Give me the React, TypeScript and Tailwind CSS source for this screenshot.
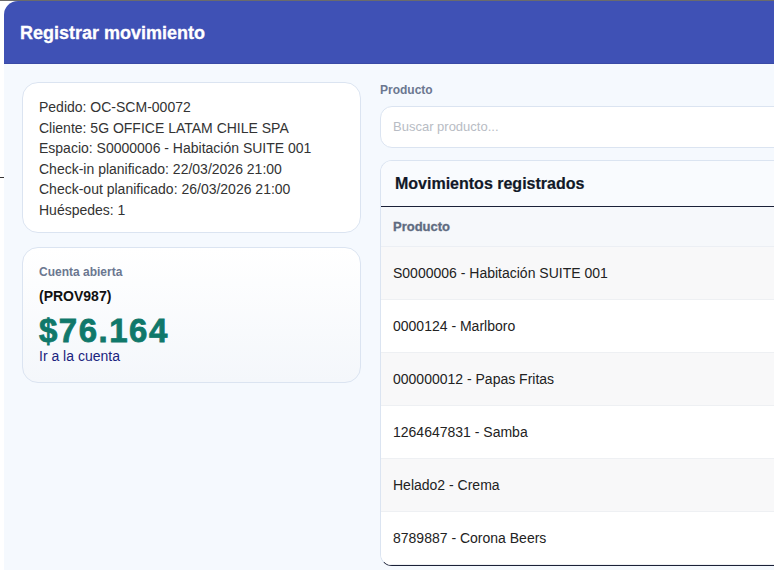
import React from 'react';

interface Movement {
  label: string;
}

const movements: Movement[] = [
  { label: 'S0000006 - Habitación SUITE 001' },
  { label: '0000124 - Marlboro' },
  { label: '000000012 - Papas Fritas' },
  { label: '1264647831 - Samba' },
  { label: 'Helado2 - Crema' },
  { label: '8789887 - Corona Beers' },
];

const bookingLines = [
  'Pedido: OC-SCM-00072',
  'Cliente: 5G OFFICE LATAM CHILE SPA',
  'Espacio: S0000006 - Habitación SUITE 001',
  'Check-in planificado: 22/03/2026 21:00',
  'Check-out planificado: 26/03/2026 21:00',
  'Huéspedes: 1',
];

const App: React.FC = () => {
  return (
    <div
      className="relative w-[774px] h-[570px] overflow-hidden bg-white"
      style={{ fontFamily: '"Liberation Sans", Arial, sans-serif' }}
    >
      {/* backdrop strip peeking over the top */}
      <div className="h-px w-full bg-[#6b6b6b]" />
      <div className="absolute left-0 top-[177px] h-px w-[4px] bg-[#333]" />

      {/* Modal */}
      <div className="ml-[4px] w-[820px] h-[569px] rounded-tl-[14px] overflow-hidden bg-[#f5f9fe] flex flex-col">
        <div className="h-[63px] shrink-0 bg-[#3f51b5] border-b border-[#3a4aa6] flex items-center px-[16px]">
          <h1 className="text-[18px] font-bold text-white [-webkit-text-stroke:0.3px_white] pt-[3px]">Registrar movimiento</h1>
        </div>

        <div className="flex gap-[19px] px-[18px] pt-[18px]">
          {/* Left column */}
          <div className="w-[339px] shrink-0 flex flex-col gap-[14px]">
            <div className="rounded-[16px] border border-[#dbe4f1] bg-white px-[16px] pt-[14px] pb-[12px]">
              {bookingLines.map((line) => (
                <p key={line} className="text-[14px] leading-[20.5px] text-[#333]">
                  {line}
                </p>
              ))}
            </div>

            <div className="rounded-[16px] border border-[#dbe4f1] bg-gradient-to-b from-white to-[#f4f7fb] px-[16px] pt-[15px] pb-[17px]">
              <p className="text-[12px] font-semibold text-[#6b7790] leading-[18px]">Cuenta abierta</p>
              <p className="mt-[6px] text-[14px] font-bold text-[#111] leading-[18px]">(PROV987)</p>
              <p className="mt-[10px] text-[33px] font-black text-[#10786a] leading-[32px] tracking-[1.5px] [-webkit-text-stroke:0.8px_#10786a]">$76.164</p>
              <a className="block text-[14px] text-[#1a237e] leading-[18px]">Ir a la cuenta</a>
            </div>
          </div>

          {/* Right column */}
          <div className="flex-1 flex flex-col">
            <label className="text-[12px] font-semibold text-[#6b7790] leading-[16px]">Producto</label>
            <div className="mt-[8px] h-[42px] rounded-[12px] border border-[#dbe4f1] bg-white flex items-center px-[12px]">
              <span className="text-[13px] text-[#b8bcc4]">Buscar producto...</span>
            </div>

            <div className="mt-[12px] rounded-[12px] border border-[#dbe4f1] border-b-[#1b2138] overflow-hidden bg-white">
              <div className="h-[46px] bg-[#f9fbfe] border-b-[1.5px] border-[#1b2138] flex items-center px-[14px]">
                <h2 className="text-[16px] font-bold text-[#111827] [-webkit-text-stroke:0.2px_#111827]">Movimientos registrados</h2>
              </div>
              <div className="h-[40px] bg-[#f6f8fb] border-b border-[#eceff4] flex items-center px-[12px]">
                <span className="text-[13px] font-bold text-[#5f6b80] [-webkit-text-stroke:0.3px_#5f6b80]">Producto</span>
              </div>
              {movements.map((m, i) => (
                <div
                  key={m.label}
                  className={`h-[53px] flex items-center px-[12px] border-b border-[#eef0f3] ${i % 2 === 0 ? 'bg-[#f8f8f9]' : 'bg-white'}`}
                >
                  <span className="text-[14px] text-[#222]">{m.label}</span>
                </div>
              ))}
            </div>
          </div>
        </div>
      </div>
    </div>
  );
};

export default App;
